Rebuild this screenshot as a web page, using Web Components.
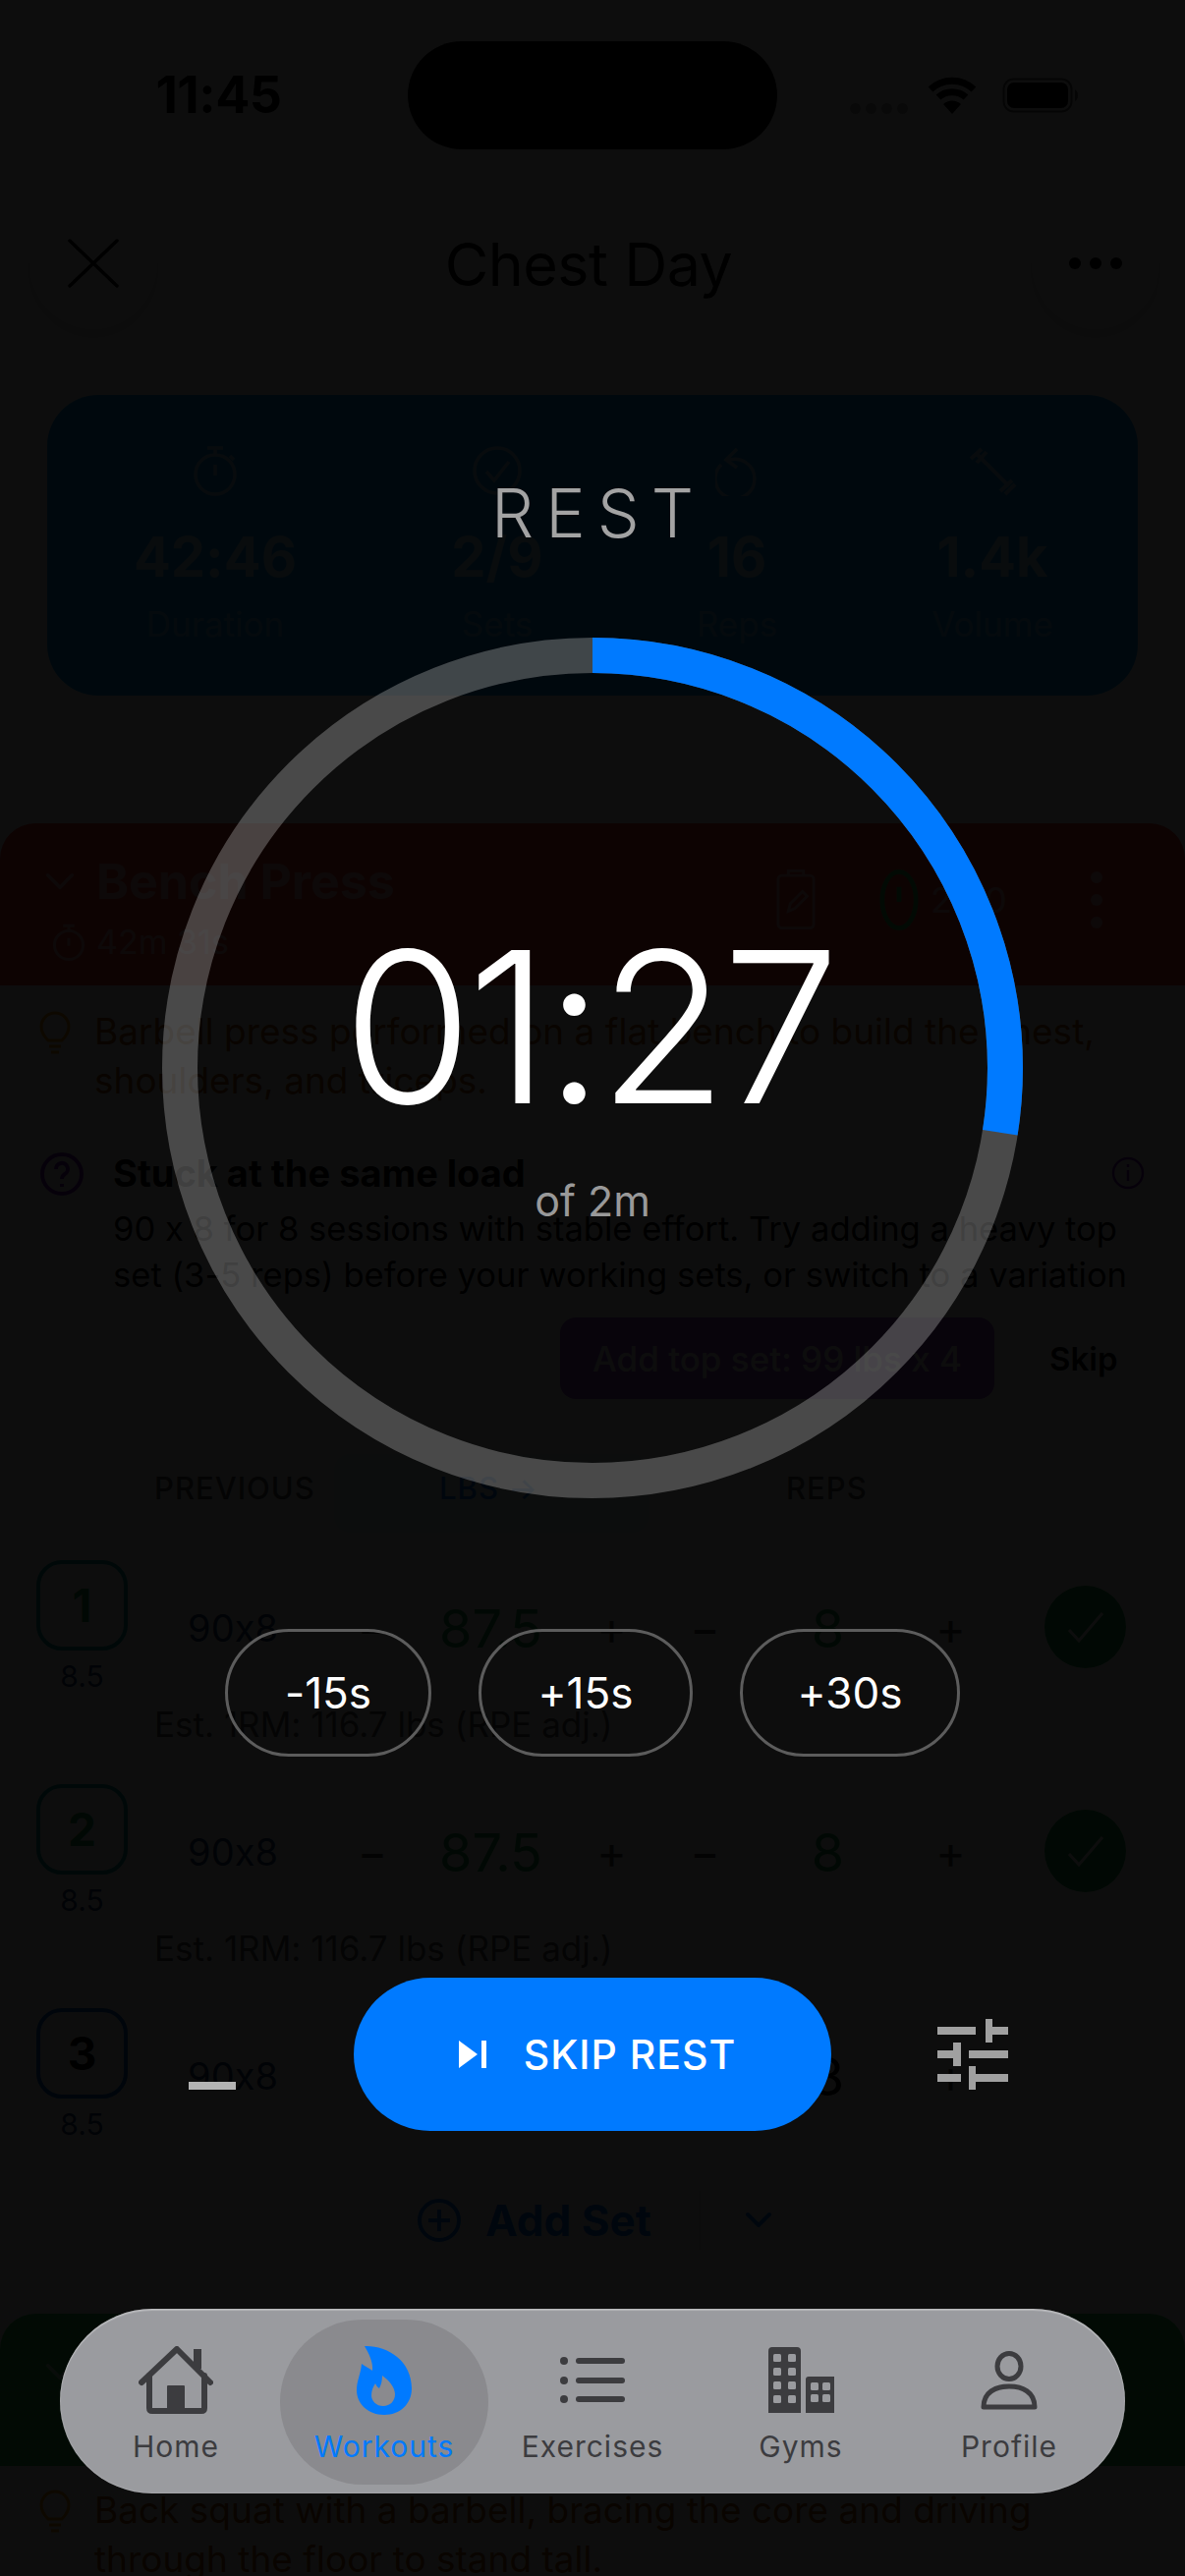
<!DOCTYPE html>
<html lang="en">
<head>
<meta charset="utf-8">
<title>Chest Day</title>
<style>
  html, body { margin: 0; padding: 0; background: #fff; }
  body { font-family: Inter, "Liberation Sans", sans-serif; color: #000; font-feature-settings: "calt" 0; }
</style>
</head>
<body>
<phone-screen>
  <status-bar></status-bar>
  <workout-header>Chest Day</workout-header>
  <stats-card>
    <stat-item icon="timer" label="Duration">42:46</stat-item>
    <stat-item icon="check" label="Sets">2/9</stat-item>
    <stat-item icon="redo" label="Reps">16</stat-item>
    <stat-item icon="weight" label="Volume">1.4k</stat-item>
  </stats-card>
  <exercise-head name="Bench Press" time="42m 31s" rest="2:00"></exercise-head>
  <exercise-note>Barbell press performed on a flat bench to build the chest,<br>shoulders, and triceps.</exercise-note>
  <coach-tip heading="Stuck at the same load" action="Add top set: 99 lbs x 4">90 x 8 for 8 sessions with stable effort. Try adding a heavy top<br>set (3-5 reps) before your working sets, or switch to a variation</coach-tip>
  <set-table-head></set-table-head>
  <set-row num="1" rpe="8.5" prev="90x8" lbs="87.5" reps="8" est="Est. 1RM: 116.7 lbs (RPE adj.)" done></set-row>
  <set-row num="2" rpe="8.5" prev="90x8" lbs="87.5" reps="8" est="Est. 1RM: 116.7 lbs (RPE adj.)" done></set-row>
  <set-row num="3" rpe="8.5" prev="90x8" lbs="87.5" reps="8"></set-row>
  <add-set></add-set>
  <exercise-head name="Back Squat" tint="#34c759" compact></exercise-head>
  <exercise-note top="20">Back squat with a barbell, bracing the core and driving<br>through the floor to stand tall.</exercise-note>

  <rest-overlay>
    <rest-ring slot="ring" elapsed="33" total="120" time="01:27" of="of 2m"></rest-ring>
    <time-pill slot="pills" w="210">-15s</time-pill>
    <time-pill slot="pills" w="218">+15s</time-pill>
    <time-pill slot="pills" w="224">+30s</time-pill>
  </rest-overlay>

  <tab-bar>
    <tab-item icon="home">Home</tab-item>
    <tab-item icon="flame" active>Workouts</tab-item>
    <tab-item icon="list">Exercises</tab-item>
    <tab-item icon="gym">Gyms</tab-item>
    <tab-item icon="user">Profile</tab-item>
  </tab-bar>
</phone-screen>

<script>
// all icons live here so the elements can ask for them by name
const ICONS = {
  timer: `<svg width="44" height="52" viewBox="0 0 44 52" fill="none" stroke="currentColor" stroke-width="3.5"><circle cx="22" cy="30" r="20"/><path d="M14 3h16M22 3v7M22 20v11M37 11l4 4"/></svg>`,
  check: `<svg width="50" height="52" viewBox="0 0 50 52" fill="none" stroke="currentColor" stroke-width="3.5"><circle cx="25" cy="26" r="23"/><path d="M14 27l8 9 15-19"/></svg>`,
  redo: `<svg width="44" height="52" viewBox="0 0 44 52" fill="none" stroke="currentColor" stroke-width="3.5"><path d="M12 16A20 20 0 1 1 6 20"/><path d="M22 4L11 15l11 8"/></svg>`,
  weight: `<svg width="50" height="52" viewBox="0 0 50 52" fill="none" stroke="currentColor" stroke-width="4"><path d="M10 10l32 32M3 14L14 4M9 18L19 7M33 47l12-11M38 50l10-10"/></svg>`,
  home: `<svg width="76" height="69" viewBox="0 0 76 69" fill="none" stroke="#3c3c3f" stroke-width="6" stroke-linecap="round" stroke-linejoin="round"><path d="M3 37L39 3l34 34"/><path d="M11 30v33q0 3 3 3h50q3 0 3-3V30"/><path d="M60 3v20" stroke-width="8" stroke-linecap="butt"/><rect x="29" y="40" width="18" height="27" rx="1" fill="#3c3c3f" stroke="none"/></svg>`,
  flame: `<svg width="56" height="71" viewBox="0 0 56 71"><path fill="#007aff" d="M8 1C30 0 56 15 56 44C56 60 44 71 28 71C12 71 0 60 0 46C0 36 4 30 5 19C8 21 13 24 16 26C17 17 12 8 8 1Z"/><path fill="#8a8a8e" d="M26 31C33 36 39 43 39 50C39 57 34 62 27 62C20 62 15 57 15 51C15 46 17 42 19 39C20 41 21 43 23 44C25 40 26 36 26 31Z"/></svg>`,
  list: `<svg width="66" height="47" viewBox="0 0 66 47" fill="#3c3c3f"><circle cx="4" cy="4" r="4"/><circle cx="4" cy="24" r="4"/><circle cx="4" cy="43" r="4"/><rect x="16" y="1" width="50" height="6" rx="3"/><rect x="16" y="21" width="50" height="6" rx="3"/><rect x="16" y="40" width="50" height="6" rx="3"/></svg>`,
  gym: `<svg width="67" height="67" viewBox="0 0 67 67"><path fill="#3c3c3f" d="M0 4q0-4 4-4h25q4 0 4 4v63H0zM38 33q0-3 3-3h26v37H38z"/><g fill="#9a9b9f"><rect x="5" y="7" width="8" height="8" rx="1.5"/><rect x="20" y="7" width="8" height="8" rx="1.5"/><rect x="5" y="21" width="8" height="8" rx="1.5"/><rect x="20" y="21" width="8" height="8" rx="1.5"/><rect x="5" y="35" width="8" height="8" rx="1.5"/><rect x="20" y="35" width="8" height="8" rx="1.5"/><rect x="5" y="49" width="8" height="8" rx="1.5"/><rect x="20" y="49" width="8" height="8" rx="1.5"/><rect x="43" y="36" width="8" height="8" rx="1.5"/><rect x="55" y="36" width="8" height="8" rx="1.5"/><rect x="43" y="48" width="8" height="8" rx="1.5"/><rect x="55" y="48" width="8" height="8" rx="1.5"/></g></svg>`,
  user: `<svg width="58" height="60" viewBox="0 0 58 60" fill="none" stroke="#3c3c3f" stroke-width="5" stroke-linejoin="round"><ellipse cx="29" cy="15.5" rx="12" ry="13"/><path d="M3 57C3 42 15 36 29 36C43 36 55 42 55 57Z"/></svg>`,
  sliders: `<svg width="72" height="72" viewBox="0 0 72 72" fill="#a0a0a0"><rect x="0" y="8" width="39" height="8"/><rect x="49" y="0" width="7" height="24"/><rect x="49" y="8" width="23" height="8"/><rect x="0" y="32" width="24" height="8"/><rect x="16" y="24" width="8" height="24"/><rect x="32" y="32" width="40" height="8"/><rect x="0" y="56" width="24" height="8"/><rect x="32" y="48" width="7" height="24"/><rect x="32" y="56" width="40" height="8"/></svg>`
};

class BaseEl extends HTMLElement {
  constructor() {
    super();
    this.attachShadow({ mode: "open" });
  }
  connectedCallback() {
    this.shadowRoot.innerHTML = this.render();
  }
  attr(name, fallback = "") {
    return this.getAttribute(name) ?? fallback;
  }
}

class PhoneScreen extends BaseEl {
  render() {
    return `<style>
      :host { display: block; position: relative; width: 1206px; height: 2622px; overflow: hidden; background: #fff; }
    </style><slot></slot>`;
  }
}

class StatusBar extends BaseEl {
  render() {
    return `<style>
      :host { display: grid; grid-template-columns: 415px 376px 415px; height: 200px; box-sizing: border-box; padding-top: 42px; align-items: start; }
      .time { font-size: 52px; font-weight: 700; line-height: 110px; text-align: center; padding-left: 30px; letter-spacing: -.5px; }
      .island { height: 110px; border-radius: 55px; background: #000; }
      .right { display: flex; align-items: center; height: 110px; padding-left: 74px; gap: 20px; }
      .dots { display: flex; gap: 5px; padding-top: 26px; }
      .dots i { width: 11px; height: 11px; border-radius: 50%; background: #b0b0b0; }
      .batt { margin-left: 6px; }
    </style>
    <div class="time">11:45</div>
    <div class="island"></div>
    <div class="right">
      <div class="dots"><i></i><i></i><i></i><i></i></div>
      <svg width="50" height="38" viewBox="0 0 50 38" fill="none" stroke="#000" stroke-width="7"><path d="M3 13a32 32 0 0 1 44 0M11 21a21 21 0 0 1 28 0"/><path d="M25 38l-9-10a13 13 0 0 1 18 0z" fill="#000" stroke="none"/></svg>
      <svg class="batt" width="78" height="36" viewBox="0 0 78 36" fill="none"><rect x="1.5" y="1.5" width="69" height="33" rx="10" stroke="#000" stroke-width="2" opacity=".6"/><rect x="5" y="5" width="62" height="26" rx="7" fill="#000"/><path d="M74 12v12q3-2 3-6t-3-6z" fill="#000" opacity=".6"/></svg>
    </div>`;
  }
}

class WorkoutHeader extends BaseEl {
  render() {
    return `<style>
      :host { display: grid; grid-template-columns: 130px 1fr 130px; height: 135px; padding: 0 26px 0 30px; align-items: center; }
      .btn { width: 130px; height: 135px; border-radius: 50%; background: #fff; box-shadow: 0 8px 30px rgba(0,0,0,.16); display: flex; align-items: center; justify-content: center; }
      .title { text-align: center; font-size: 61px; font-weight: 400; letter-spacing: -.5px; padding: 2px 12px 0 0; }
      .more { display: flex; gap: 9px; }
      .more i { width: 12px; height: 12px; border-radius: 50%; background: #000; }
    </style>
    <div class="btn"><svg width="52" height="50" viewBox="0 0 52 50" stroke="#000" stroke-width="3.5" stroke-linecap="round"><path d="M2 2l48 46M50 2L2 48"/></svg></div>
    <div class="title"><slot></slot></div>
    <div class="btn"><div class="more"><i></i><i></i><i></i></div></div>`;
  }
}

class StatsCard extends BaseEl {
  render() {
    return `<style>
      :host { display: grid; grid-template-columns: 342px 232px 256px 264px; height: 306px; margin: 67px 48px 130px; border-radius: 52px; background: #00a0ff; color: #fff; }
    </style><slot></slot>`;
  }
}

class StatItem extends BaseEl {
  render() {
    return `<style>
      :host { display: flex; flex-direction: column; align-items: center; padding-top: 51px; box-sizing: border-box; }
      .icon { height: 52px; opacity: .6; }
      .value { font-size: 56px; font-weight: 700; line-height: 64px; margin-top: 30px; opacity: .65; }
      .label { font-size: 35px; line-height: 44px; margin-top: 14px; opacity: .4; }
    </style>
    <div class="icon">${ICONS[this.attr("icon")]}</div>
    <div class="value"><slot></slot></div>
    <div class="label">${this.attr("label")}</div>`;
  }
}

class ExerciseHead extends BaseEl {
  render() {
    const tint = this.attr("tint", "#ff3b30");
    const compact = this.hasAttribute("compact");
    const timeLine = compact ? "" : `<div class="time"><svg width="32" height="38" viewBox="0 0 44 52" fill="none" stroke="#fff" stroke-width="4"><circle cx="22" cy="30" r="20"/><path d="M14 3h16M22 3v7M22 20v11"/></svg>${this.attr("time")}</div>`;
    const tools = compact ? "" : `<div class="tools">
        <svg width="42" height="66" viewBox="0 0 44 68" fill="none" stroke="#fff" stroke-width="3" opacity=".6"><rect x="3" y="8" width="38" height="56" rx="4"/><path d="M14 8V3h16v5M14 46l2-8 13-13 5 5-13 13z"/></svg>
        <svg class="clock" width="40" height="66" viewBox="0 0 42 68" fill="none" stroke="#34c759" stroke-width="5"><ellipse cx="21" cy="34" rx="18" ry="30"/><path d="M21 20v16"/></svg>
        <span class="rest">${this.attr("rest")}</span>
        <span class="dots"><i></i><i></i><i></i></span>
      </div>`;
    return `<style>
      :host { display: block; position: relative; height: ${compact ? 155 : 165}px; margin-top: ${compact ? 29 : 0}px; box-sizing: border-box; padding: 26px 0 0 46px; border-radius: 36px 36px 0 0; background: ${tint}; color: #fff; }
      .name { display: flex; align-items: center; gap: 22px; font-size: 50px; font-weight: 700; line-height: 66px; opacity: .6; }
      .time { display: flex; align-items: center; gap: 12px; font-size: 34px; line-height: 48px; margin: 5px 0 0 8px; opacity: .6; }
      .tools { position: absolute; top: 45px; left: 789px; display: flex; align-items: center; }
      .clock { margin-left: 64px; }
      .rest { font-size: 36px; margin-left: 12px; width: 135px; overflow: hidden; white-space: nowrap; opacity: .6; }
      .dots { display: flex; flex-direction: column; gap: 11px; margin-left: 28px; opacity: .6; }
      .dots i { width: 12px; height: 12px; border-radius: 50%; background: #fff; }
    </style>
    <div class="name"><svg width="30" height="18" viewBox="0 0 34 20" fill="none" stroke="#fff" stroke-width="4" stroke-linecap="round" stroke-linejoin="round"><path d="M3 3l14 14L31 3"/></svg>${this.attr("name")}</div>
    ${timeLine}${tools}`;
  }
}

class ExerciseNote extends BaseEl {
  render() {
    const last = this.hasAttribute("top");
    return `<style>
      :host { display: flex; gap: 24px; padding: ${this.attr("top", "22")}px 0 0 40px; height: ${last ? "auto" : "123px"}; font-size: 37px; line-height: 50px; color: #a85400; border-bottom: ${last ? "0" : "2px solid #eee"}; }
    </style>
    <svg width="32" height="44" viewBox="0 0 32 44" fill="none" stroke="#ff9500" stroke-width="3" style="margin-top:4px;flex:none"><path d="M9 30C5 26 2 22 2 16a14 14 0 0 1 28 0c0 6-3 10-7 14zM10 36h12M12 42h8"/></svg>
    <div><slot></slot></div>`;
  }
}

class CoachTip extends BaseEl {
  render() {
    return `<style>
      :host { display: block; position: relative; height: 295px; box-sizing: border-box; padding: 21px 0 0 115px; }
      svg { position: absolute; }
      .heading { font-size: 38px; font-weight: 700; line-height: 46px; }
      .body { font-size: 34.6px; line-height: 47px; margin-top: 10px; white-space: nowrap; }
      .actions { display: flex; align-items: center; margin: 20px 0 0 455px; gap: 56px; }
      .btn { width: 442px; height: 83px; border-radius: 16px; background: #7a1fc4; color: #fff; display: flex; align-items: center; justify-content: center; font-size: 35px; font-weight: 500; opacity: .8; }
      .skip { font-size: 33px; font-weight: 600; }
    </style>
    <svg style="left:40px;top:22px" width="46" height="46" viewBox="0 0 46 46" fill="none" stroke="#7a1fc4" stroke-width="4"><circle cx="23" cy="23" r="20"/><path d="M17 18a6 6 0 1 1 9 5q-3 2-3 5M23 33v3"/></svg>
    <svg style="left:1131px;top:27px" width="34" height="34" viewBox="0 0 34 34" fill="none" stroke="#7a1fc4" stroke-width="2.5"><circle cx="17" cy="17" r="15"/><path d="M17 14v11M17 8v3"/></svg>
    <div class="heading">${this.attr("heading")}</div>
    <div class="body"><slot></slot></div>
    <div class="actions"><div class="btn">${this.attr("action")}</div><div class="skip">Skip</div></div>`;
  }
}

class SetTableHead extends BaseEl {
  render() {
    return `<style>
      :host { display: grid; grid-template-columns: 183px 320px 1fr; height: 143px; box-sizing: border-box; padding: 35px 0 0 157px; font-size: 31px; font-weight: 500; letter-spacing: 1px; color: #555; }
      span { line-height: 70px; }
      .lbs { background: #e8f2ff; border-radius: 16px; height: 80px; color: #007aff; padding-left: 107px; }
      .reps { padding-left: 140px; }
    </style>
    <span>PREVIOUS</span><span class="lbs">LBS &#8594;</span><span class="reps">REPS</span>`;
  }
}

class SetRow extends BaseEl {
  render() {
    const done = this.hasAttribute("done");
    const est = this.attr("est");
    return `<style>
      :host { display: grid; grid-template-columns: 93px 174px 70px 131px 75px 75px 135px 75px 158px; column-gap: 20px; grid-template-rows: 152px 1fr; height: ${est ? 228 : 150}px; padding-left: 37px; box-sizing: border-box; align-content: start; }
      .set { display: flex; flex-direction: column; align-items: center; }
      .badge { width: 93px; height: 92px; box-sizing: border-box; border: 4px solid ${done ? "#00a0a0" : "#0060d0"}; border-radius: 26px; display: flex; align-items: center; justify-content: center; font-size: 46px; font-weight: 700; color: ${done ? "#16a34a" : "#000"}; }
      .rpe { font-size: 30px; line-height: 44px; margin-top: 4px; color: #1c3a70; }
      .cell { display: flex; align-items: center; justify-content: center; height: 82px; margin-top: 28px; font-size: 38px; }
      .prev { color: #1c3a70; }
      .box { background: #f3f3f3; border-radius: 14px; }
      .val { font-size: 54px; font-weight: 400; color: ${done ? "#16a34a" : "#000"}; }
      .step { color: #444; font-size: 46px; }
      .check { width: 83px; height: 84px; margin-top: 26px; border-radius: 50%; background: ${done ? "#16a34a" : "#f6f6f6"}; display: flex; align-items: center; justify-content: center; }
      .est { grid-column: 2 / -1; font-size: 35px; padding-left: 7px; line-height: 44px; margin-top: -7px; color: #555; }
    </style>
    <div class="set"><div class="badge">${this.attr("num")}</div><div class="rpe">${this.attr("rpe")}</div></div>
    <div class="cell prev">${this.attr("prev")}</div>
    <div class="cell box step">&#8722;</div>
    <div class="cell box val">${this.attr("lbs")}</div>
    <div class="cell box step">+</div>
    <div class="cell box step">&#8722;</div>
    <div class="cell box val">${this.attr("reps")}</div>
    <div class="cell box step">+</div>
    <div><div class="check" style="margin-left:38px"><svg width="40" height="34" viewBox="0 0 40 34" fill="none" stroke="#fff" stroke-width="3"><path d="M3 20l10 11L37 3"/></svg></div></div>
    ${est ? `<div class="est">${est}</div>` : ""}`;
  }
}

class AddSet extends BaseEl {
  render() {
    return `<style>
      :host { display: flex; align-items: center; height: 132px; box-sizing: border-box; padding: 0 0 0 424px; font-size: 44px; font-weight: 700; color: #007aff; }
      .label { margin-left: 24px; }
      .sep { width: 2px; height: 60px; background: #ddd; margin: 0 45px 0 48px; }
    </style>
    <svg width="46" height="46" viewBox="0 0 46 46" fill="none" stroke="#007aff" stroke-width="4"><circle cx="23" cy="23" r="20"/><path d="M23 12v22M12 23h22"/></svg>
    <span class="label">Add Set</span><span class="sep"></span>
    <svg width="28" height="18" viewBox="0 0 28 18" fill="none" stroke="#007aff" stroke-width="4" stroke-linecap="round" stroke-linejoin="round"><path d="M3 3l11 11L25 3"/></svg>`;
  }
}

class RestOverlay extends BaseEl {
  render() {
    return `<style>
      :host { position: absolute; inset: 0; display: flex; flex-direction: column; align-items: center; box-sizing: border-box; padding-top: 480px; background: rgba(0,0,0,.95); color: #fff; }
      .title { font-size: 68px; font-weight: 300; line-height: 85px; letter-spacing: 12px; padding-left: 12px; color: #a3a3a3; }
      .ring { margin-top: 84px; height: 876px; }
      .pills { display: flex; gap: 48px; margin-top: 133px; }
      .footer { display: grid; grid-template-columns: 360px 486px 360px; width: 1206px; height: 156px; margin-top: 225px; }
      .bar { width: 48px; height: 8px; background: #b4b4b4; margin: 106px 0 0 192px; }
      .skip { border-radius: 78px; background: #007aff; display: flex; align-items: center; justify-content: center; gap: 38px; font-size: 41px; font-weight: 500; letter-spacing: 1px; color: #fff; padding-left: 10px; }
      .sliders { margin: 42px 0 0 108px; }
    </style>
    <div class="title">REST</div>
    <div class="ring"><slot name="ring"></slot></div>
    <div class="pills"><slot name="pills"></slot></div>
    <div class="footer">
      <div class="bar"></div>
      <div class="skip">
        <svg width="28" height="28" viewBox="0 0 28 28" fill="#fff"><path d="M0 0l19 14L0 28z"/><rect x="23" y="0" width="5" height="28"/></svg>
        <span>SKIP REST</span>
      </div>
      <div class="sliders">${ICONS.sliders}</div>
    </div>`;
  }
}

class RestRing extends BaseEl {
  render() {
    const r = 420;
    const circ = 2 * Math.PI * r;
    const part = circ * Number(this.attr("elapsed")) / Number(this.attr("total"));
    return `<style>
      :host { display: block; position: relative; width: 876px; height: 876px; }
      svg { display: block; transform: rotate(-90deg); }
      .inner { position: absolute; inset: 0; display: flex; flex-direction: column; align-items: center; padding-top: 289px; box-sizing: border-box; }
      .time { font-size: 214px; font-weight: 300; line-height: 216px; letter-spacing: -5.5px; padding-right: 8px; }
      .of { font-size: 43px; line-height: 50px; margin-top: 43px; color: #999; font-weight: 400; }
    </style>
    <svg width="876" height="876" viewBox="0 0 876 876" fill="none" stroke-width="36">
      <circle cx="438" cy="438" r="${r}" stroke="rgba(255,255,255,.25)"/>
      <circle cx="438" cy="438" r="${r}" stroke="#007aff" stroke-dasharray="${part} ${circ}"/>
    </svg>
    <div class="inner"><div class="time">${this.attr("time")}</div><div class="of">${this.attr("of")}</div></div>`;
  }
}

class TimePill extends BaseEl {
  render() {
    return `<style>
      :host { display: flex; align-items: center; justify-content: center; width: ${this.attr("w")}px; height: 130px; box-sizing: border-box; border: 3px solid #5c5c5c; border-radius: 65px; font-size: 44px; font-weight: 400; color: #fff; }
    </style><slot></slot>`;
  }
}

class TabBar extends BaseEl {
  render() {
    return `<style>
      :host { position: absolute; left: 61px; top: 2350px; width: 1084px; height: 188px; box-sizing: border-box; padding: 11px 12px; display: grid; grid-template-columns: repeat(5, 212px); border-radius: 94px; background: #9a9b9f; box-shadow: inset 0 2px 1px rgba(255,255,255,.25), inset 0 0 2px rgba(255,255,255,.35); }
    </style><slot></slot>`;
  }
}

class TabItem extends BaseEl {
  render() {
    const active = this.hasAttribute("active");
    return `<style>
      :host { display: flex; flex-direction: column; align-items: center; height: 168px; border-radius: 84px; background: ${active ? "#8a8a8e" : "transparent"}; color: ${active ? "#007aff" : "#3c3c3f"}; }
      .icon { height: 73px; margin-top: 25px; display: flex; align-items: center; justify-content: center; }
      .label { font-size: 30px; font-weight: 400; letter-spacing: 1px; line-height: 44px; margin-top: 9px; }
    </style>
    <div class="icon">${ICONS[this.attr("icon")]}</div>
    <div class="label"><slot></slot></div>`;
  }
}

customElements.define("phone-screen", PhoneScreen);
customElements.define("status-bar", StatusBar);
customElements.define("workout-header", WorkoutHeader);
customElements.define("stats-card", StatsCard);
customElements.define("stat-item", StatItem);
customElements.define("exercise-head", ExerciseHead);
customElements.define("exercise-note", ExerciseNote);
customElements.define("coach-tip", CoachTip);
customElements.define("set-table-head", SetTableHead);
customElements.define("set-row", SetRow);
customElements.define("add-set", AddSet);
customElements.define("rest-overlay", RestOverlay);
customElements.define("rest-ring", RestRing);
customElements.define("time-pill", TimePill);
customElements.define("tab-bar", TabBar);
customElements.define("tab-item", TabItem);
</script>
</body>
</html>
